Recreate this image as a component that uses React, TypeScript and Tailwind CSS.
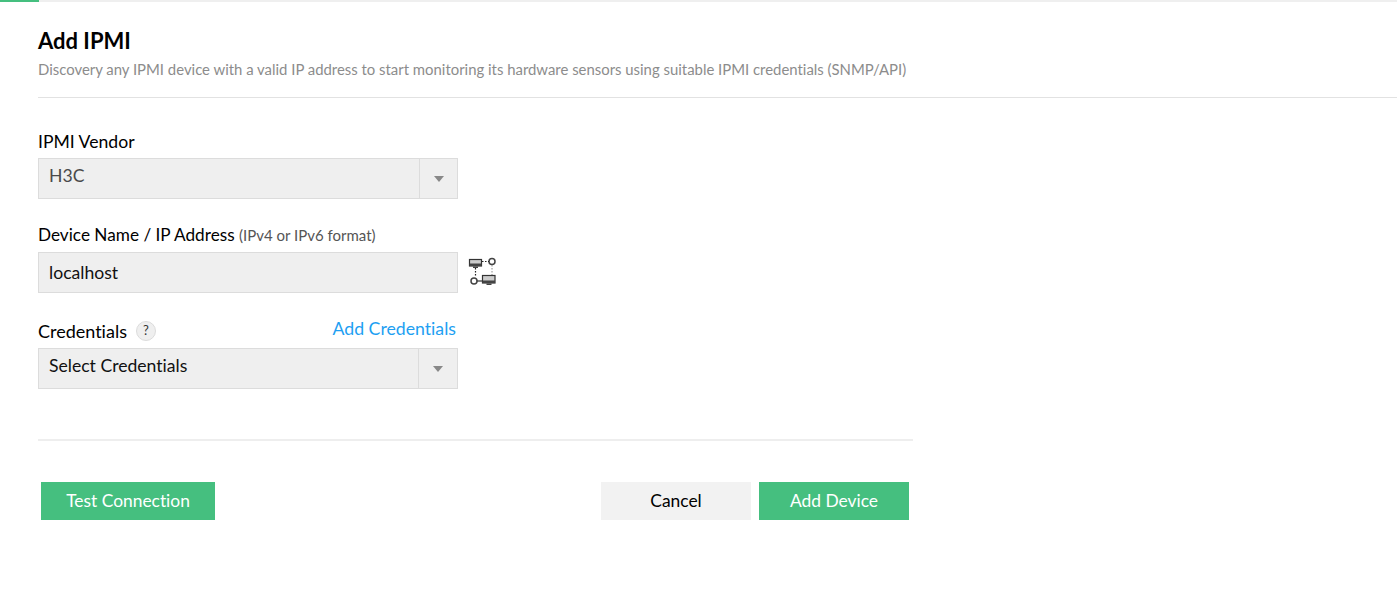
function NetworkIcon() {
    return (
        <svg width="30" height="30" viewBox="0 0 30 30" className="ml-[10px] mt-[5px] shrink-0">
            <rect x="1.5" y="2.5" width="12" height="6.5" fill="#ccc" stroke="#333" strokeWidth="1.2" />
            <rect x="1.5" y="6.5" width="12" height="2.5" fill="#444" />
            <rect x="5" y="9.5" width="5" height="1.5" fill="#444" />
            <circle cx="24" cy="4.5" r="3" fill="#fff" stroke="#444" strokeWidth="1.5" />
            <path d="M14 4.5h7M7.5 11v9" stroke="#222" strokeWidth="1.2" strokeDasharray="1.5 1.5" fill="none" />
            <path d="M24 8v10" stroke="#888" strokeDasharray="1.5 1.5" fill="none" />
            <circle cx="6" cy="24" r="3" fill="#fff" stroke="#444" strokeWidth="1.5" />
            <rect x="14.5" y="18.5" width="12.5" height="7.5" fill="#ccc" stroke="#333" strokeWidth="1.2" />
            <rect x="14.5" y="23.5" width="12.5" height="2.5" fill="#444" />
            <rect x="18.5" y="26.5" width="5" height="1.5" fill="#444" />
            <path d="M9 24h5.5" stroke="#333" strokeWidth="1.2" fill="none" />
        </svg>
    );
}

function Caret() {
    return <span className="w-0 h-0 border-x-[5px] border-x-transparent border-t-[6px] border-t-[#888]"></span>;
}

function SelectBox({ text, textColor, arrowWidth }: { text: string; textColor: string; arrowWidth: string }) {
    return (
        <div className="flex w-[420px] h-[41px] bg-[#efefef] border border-[#dcdcdc]">
            <div className={`flex-1 pl-[10px] pt-[5px] text-[17.6px] leading-[24px] ${textColor}`}>{text}</div>
            <div className={`flex items-center justify-center border-l border-[#dcdcdc] ${arrowWidth}`}>
                <Caret />
            </div>
        </div>
    );
}

export default function App() {
    return (
        <div className="w-full min-h-[601px] bg-white font-['Lato','Liberation_Sans',sans-serif] [font-variant-ligatures:none] text-black overflow-hidden">
            <div className="h-[2px] bg-[#efefef]">
                <div className="w-[39px] h-[2px] bg-[#45bf7f]"></div>
            </div>
            <div className="pl-[38px]">
                <div className="h-[96px] border-b border-[#e2e2e2] pt-[24px]">
                    <h1 className="text-[22px] leading-[30px] font-bold">Add IPMI</h1>
                    <p className="text-[14.9px] leading-[20px] mt-[3px] text-[#8c8c8c]">
                        Discovery any IPMI device with a valid IP address to start monitoring its hardware sensors using suitable IPMI credentials (SNMP/API)
                    </p>
                </div>
                <label className="block mt-[32px] text-[17.6px] leading-[24px]">IPMI Vendor</label>
                <div className="mt-[4px]">
                    <SelectBox text="H3C" textColor="text-[#4a4a4a]" arrowWidth="w-[38px]" />
                </div>
                <label className="block mt-[24px] text-[17.2px] leading-[24px]">
                    Device Name / IP Address <span className="text-[15px] text-[#555]">(IPv4 or IPv6 format)</span>
                </label>
                <div className="flex mt-[5px]">
                    <div className="w-[420px] h-[41px] bg-[#efefef] border border-[#dcdcdc] pl-[10px] pt-[8px] text-[17.6px] leading-[24px] text-[#111]">
                        localhost
                    </div>
                    <NetworkIcon />
                </div>
                <div className="flex justify-between items-start w-[420px] mt-[24px] h-[31px] pr-[2px]">
                    <div className="flex items-center mt-[2px]">
                        <span className="text-[18px] leading-[24px]">Credentials</span>
                        <span className="ml-[9px] w-[20px] h-[20px] rounded-full bg-[#efefef] border border-[#dcdcdc] flex items-center justify-center text-[13px] text-[#333]">?</span>
                    </div>
                    <a className="text-[17.7px] leading-[24px] text-[#1e9ff2]">Add Credentials</a>
                </div>
                <SelectBox text="Select Credentials" textColor="text-[#111]" arrowWidth="w-[39px]" />
                <div className="w-[875px] mt-[50px] border-t-2 border-[#eeeeee]"></div>
                <div className="flex justify-between w-[874px] mt-[41px] px-[3px]">
                    <button className="w-[174px] h-[38px] pt-[1px] bg-[#45bf7f] text-white text-[17.4px]">Test Connection</button>
                    <div className="flex gap-[8px]">
                        <button className="w-[150px] h-[38px] pt-[1px] bg-[#f2f2f2] text-black text-[17.4px]">Cancel</button>
                        <button className="w-[150px] h-[38px] pt-[1px] bg-[#45bf7f] text-white text-[17.4px]">Add Device</button>
                    </div>
                </div>
            </div>
        </div>
    );
}
